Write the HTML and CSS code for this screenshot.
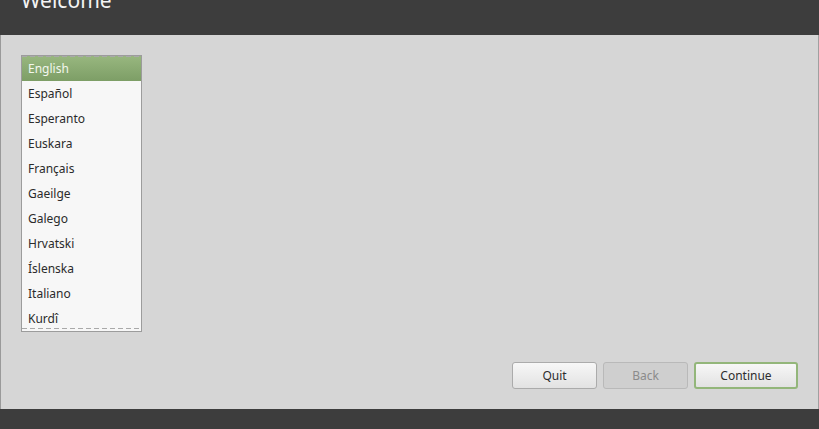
FILE: index.html
```html
<!DOCTYPE html>
<html>
<head>
<meta charset="utf-8">
<link rel="stylesheet" href="styles.css">
</head>
<body>
<div class="window">
  <header class="header"><h1 class="title">Welcome</h1></header>
  <main class="main">
    <div class="langlist">
      <div class="row selected">English</div>
      <div class="row">Español</div>
      <div class="row">Esperanto</div>
      <div class="row">Euskara</div>
      <div class="row">Français</div>
      <div class="row">Gaeilge</div>
      <div class="row">Galego</div>
      <div class="row">Hrvatski</div>
      <div class="row">Íslenska</div>
      <div class="row">Italiano</div>
      <div class="row">Kurdî</div>
    </div>
    <div class="actions">
      <button class="btn btn-quit">Quit</button>
      <button class="btn btn-back" disabled>Back</button>
      <button class="btn btn-continue">Continue</button>
    </div>
  </main>
  <footer class="footer"></footer>
</div>
</body>
</html>
```

FILE: styles.css
```css
html, body {
  margin: 0;
  padding: 0;
  width: 819px;
  height: 429px;
  overflow: hidden;
  font-family: "Noto Sans", "DejaVu Sans", sans-serif;
}
.window {
  display: flex;
  flex-direction: column;
  width: 819px;
  height: 429px;
}
.header {
  height: 35px;
  flex: none;
  background: #3d3d3d;
  overflow: hidden;
  padding-left: 21px;
}
.title {
  margin: -10px 0 0 0;
  font-size: 21px;
  line-height: 21px;
  font-weight: normal;
  color: #f4f4f4;
}
.main {
  flex: 1;
  display: flex;
  flex-direction: column;
  background: #d6d6d6;
  border-left: 1px solid #9a9a9a;
  border-right: 1px solid #a0a0a0;
  padding: 20px 20px 20px 20px;
}
.langlist {
  position: relative;
  width: 119px;
  border: 1px solid #9c9c9c;
  background: #f7f7f7;
}
.langlist::before,
.langlist::after {
  content: "";
  position: absolute;
  left: 0;
  right: 0;
  height: 1px;
  background: repeating-linear-gradient(to right, #a9a9a9 0 5px, transparent 5px 8px);
}
.langlist::before { top: 0; }
.langlist::after { bottom: 2px; }
.row {
  height: 25px;
  line-height: 25px;
  padding-left: 6px;
  font-size: 12px;
  color: #2b2b2b;
}
.row.selected {
  background: linear-gradient(#98b77f, #7d9e66);
  color: #f3f7ee;
}
.actions {
  margin-top: auto;
  display: flex;
  justify-content: flex-end;
  gap: 6px;
}
.btn {
  height: 27px;
  border: 1px solid #ababab;
  border-radius: 3px;
  background: linear-gradient(#f7f7f7, #e2e2e2);
  font-family: "Noto Sans", "DejaVu Sans", sans-serif;
  font-size: 12px;
  color: #2d2d2d;
  padding: 0;
}
.btn-quit, .btn-back { width: 85px; }
.btn-back {
  background: #cfcfcf;
  border-color: #b9b9b9;
  color: #8b8b8b;
}
.btn-continue {
  width: 104px;
  border: 2px solid #93b67a;
}
.footer {
  height: 20px;
  flex: none;
  background: #3d3d3d;
}
```
